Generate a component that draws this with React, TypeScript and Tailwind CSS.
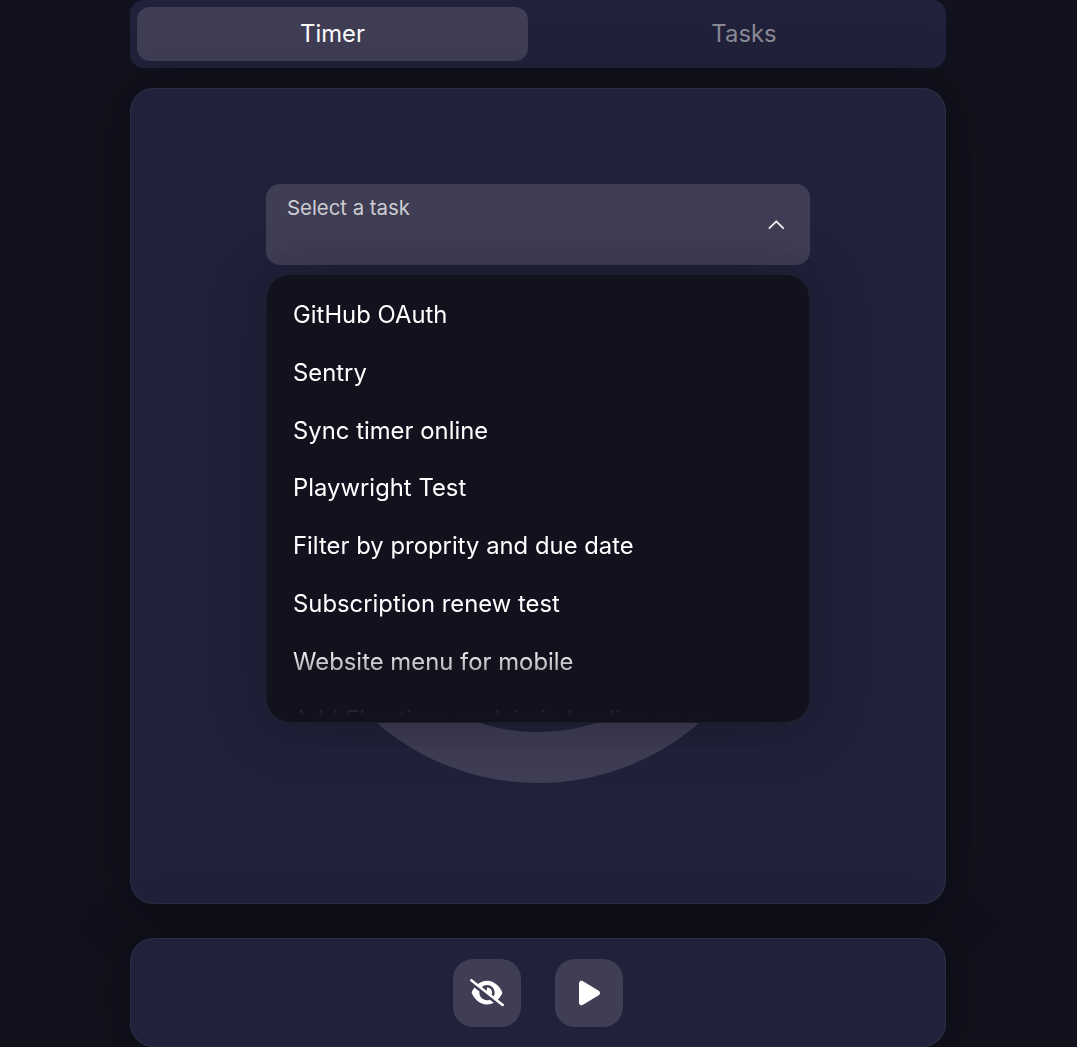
import { FaEyeSlash, FaPlay } from "react-icons/fa6";

const tasks = [
  "GitHub OAuth",
  "Sentry",
  "Sync timer online",
  "Playwright Test",
  "Filter by proprity and due date",
  "Subscription renew test",
  "Website menu for mobile",
  "Add Flex time explain in landing page",
];

const panel =
  "bg-[#21213b] shadow-[0_0_34px_0_rgba(0,0,0,0.06),0_3.4px_72px_0_rgba(0,0,0,0.24),inset_0_0_1.7px_0_rgba(255,255,255,0.24)]";

function Tabs() {
  return (
    <div className="flex h-[68px] shrink-0 rounded-[14px] bg-[#21213b] p-[7px] text-[23.8px]">
      <button className="h-[54px] w-[391px] rounded-[13px] bg-[#403e55] text-white">Timer</button>
      <button className="flex-1 pl-[21px] text-[#8c8a97]">Tasks</button>
    </div>
  );
}

function TaskMenu() {
  return (
    <div className="absolute left-0 top-[90px] h-[449px] w-[544px] overflow-hidden rounded-[24px] bg-[#12121e] px-[15px] py-[12px] shadow-[0_0_34px_0_rgba(0,0,0,0.06),0_3.4px_64px_0_rgba(0,0,0,0.24),inset_0_0_1.7px_0_rgba(255,255,255,0.2)]">
      <ul className="h-[430px] overflow-hidden [mask-image:linear-gradient(#000_0,#000_calc(100%-68px),transparent)]">
        {tasks.map((t) => (
          <li key={t} className="flex h-[57.8px] items-center px-[12px] text-[23.8px] whitespace-nowrap text-white">
            {t}
          </li>
        ))}
      </ul>
    </div>
  );
}

function TaskSelect() {
  return (
    <div className="relative z-10 w-[544px]">
      <button className="flex h-[81px] w-full items-start justify-between rounded-[14px] bg-[#403e55] pr-[24px] pl-[21px] text-left">
        <span className="mt-[10px] text-[20.4px] leading-[28px] tracking-[-0.03px] text-[#cdccd2]">Select a task</span>
        <svg className="mt-[31px] h-5 w-5" viewBox="0 0 20 20" fill="none" stroke="#f1f1f3" strokeWidth="1.8" strokeLinecap="round" strokeLinejoin="round">
          <path d="M3.4 13.2 10.3 6.3 17.2 13.2" />
        </svg>
      </button>
      <TaskMenu />
    </div>
  );
}

export default function App() {
  return (
    <div className="h-[1056px] w-[1085px] overflow-hidden bg-white font-['Inter',sans-serif] tracking-[0.03px]">
      <div className="h-[1047px] w-[1077px] overflow-hidden bg-[#12121e]">
        <main className="ml-[130px] flex w-[816px] flex-col">
          <Tabs />
          <section className={`mt-5 flex h-[816px] flex-col items-center rounded-[24px] pt-[96px] ${panel}`}>
            <TaskSelect />
            <svg className="mt-[26px] h-[492px] w-[492px] shrink-0" viewBox="0 0 492 492">
              <circle cx="246" cy="246" r="220.5" fill="none" stroke="#403e55" strokeWidth="51" />
            </svg>
          </section>
          <section className={`mt-[34px] flex h-[109px] items-start justify-center gap-[34px] rounded-[24px] pt-[21px] text-white ${panel}`}>
            <button className="flex h-[68px] w-[68px] items-center justify-center rounded-[20px] bg-[#403e55]">
              <FaEyeSlash className="h-[27.2px] w-[34px]" />
            </button>
            <button className="flex h-[68px] w-[68px] items-center justify-center rounded-[20px] bg-[#403e55] pl-px">
              <FaPlay className="h-[28px] w-[21px]" />
            </button>
          </section>
        </main>
      </div>
    </div>
  );
}
